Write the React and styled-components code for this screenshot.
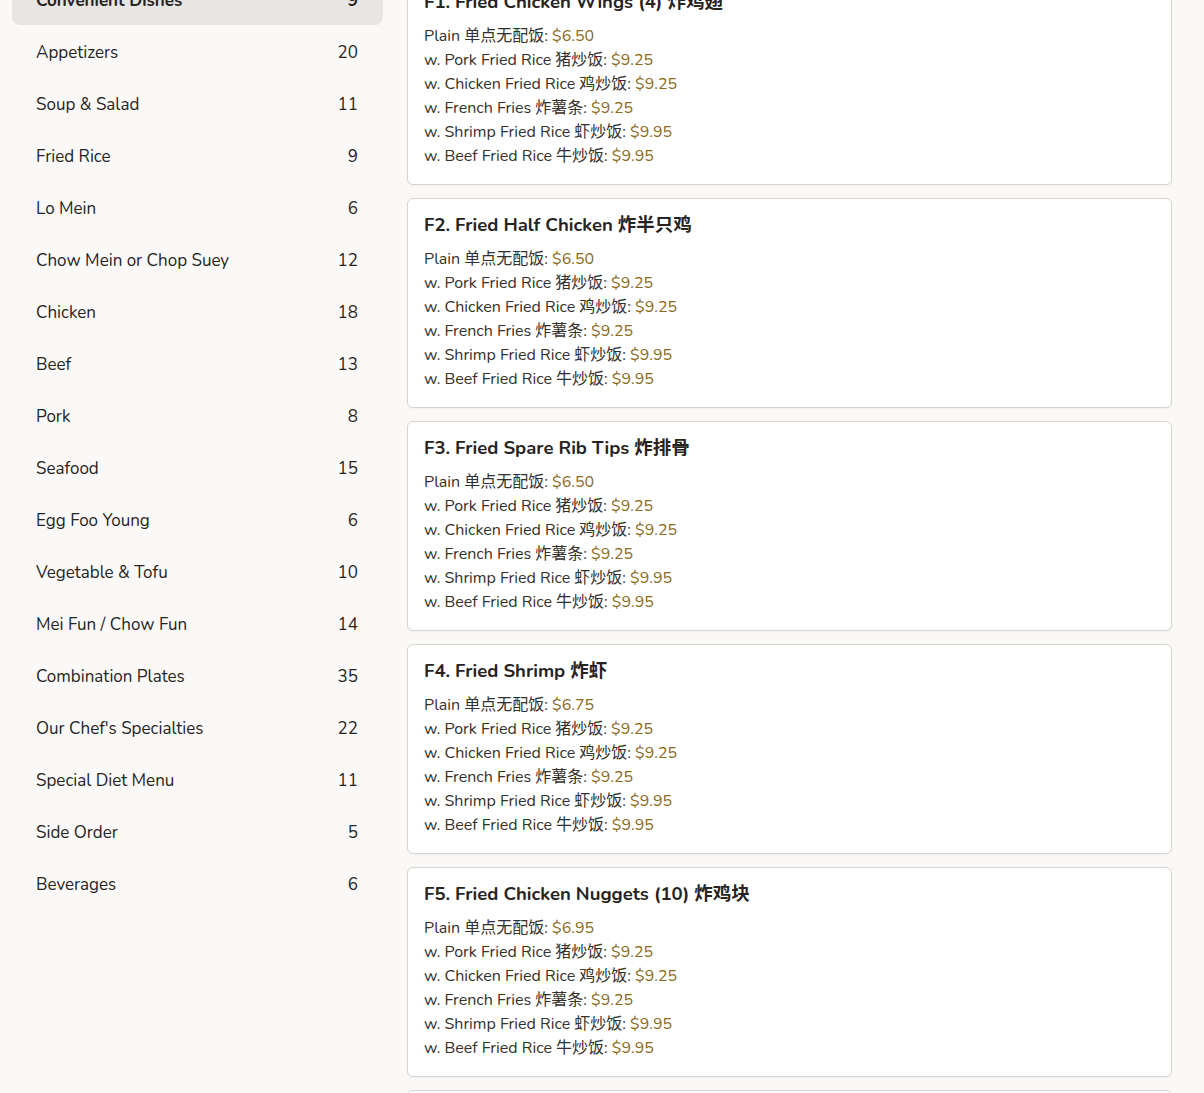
import React from 'react';
import styled, { createGlobalStyle } from 'styled-components';

const categories = [
  ['Convenient Dishes', 9],
  ['Appetizers', 20],
  ['Soup & Salad', 11],
  ['Fried Rice', 9],
  ['Lo Mein', 6],
  ['Chow Mein or Chop Suey', 12],
  ['Chicken', 18],
  ['Beef', 13],
  ['Pork', 8],
  ['Seafood', 15],
  ['Egg Foo Young', 6],
  ['Vegetable & Tofu', 10],
  ['Mei Fun / Chow Fun', 14],
  ['Combination Plates', 35],
  ["Our Chef's Specialties", 22],
  ['Special Diet Menu', 11],
  ['Side Order', 5],
  ['Beverages', 6],
];

const sides = [
  ['w. Pork Fried Rice 猪炒饭', '$9.25'],
  ['w. Chicken Fried Rice 鸡炒饭', '$9.25'],
  ['w. French Fries 炸薯条', '$9.25'],
  ['w. Shrimp Fried Rice 虾炒饭', '$9.95'],
  ['w. Beef Fried Rice 牛炒饭', '$9.95'],
];

const dishes = [
  { name: 'F1. Fried Chicken Wings (4) 炸鸡翅', plain: '$6.50' },
  { name: 'F2. Fried Half Chicken 炸半只鸡', plain: '$6.50' },
  { name: 'F3. Fried Spare Rib Tips 炸排骨', plain: '$6.50' },
  { name: 'F4. Fried Shrimp 炸虾', plain: '$6.75' },
  { name: 'F5. Fried Chicken Nuggets (10) 炸鸡块', plain: '$6.95' },
  { name: 'F6. Fried Scallops 炸带子', plain: '$6.95' },
];

export default function App() {
  return (
    <>
      <GlobalStyle />
      <Layout>
        <Sidebar>
          {categories.map(([label, count], i) => (
            <CategoryItem key={label} active={i === 0}>
              <span>{label}</span>
              <Count>{count}</Count>
            </CategoryItem>
          ))}
        </Sidebar>

        <Menu>
          {dishes.map((d) => (
            <DishCard key={d.name}>
              <DishTitle>{d.name}</DishTitle>
              <PriceList>
                <PriceRow>
                  Plain 单点无配饭: <Price>{d.plain}</Price>
                </PriceRow>
                {sides.map(([label, price]) => (
                  <PriceRow key={label}>
                    {label}: <Price>{price}</Price>
                  </PriceRow>
                ))}
              </PriceList>
            </DishCard>
          ))}
        </Menu>
      </Layout>
    </>
  );
}

const GlobalStyle = createGlobalStyle`
  html, body {
    margin: 0;
    background: #faf9f7;
    overflow: hidden;
  }
  body {
    font-family: Nunito, "Noto Sans", "Noto Sans CJK SC", sans-serif;
    color: #27241f;
  }
`;

// the page is shown scrolled down a little, as in the menu view
const Layout = styled.div`
  display: grid;
  grid-template-columns: 371px 765px;
  column-gap: 24px;
  align-items: start;
  padding-left: 12px;
  margin-top: -25px;
`;

const Sidebar = styled.nav`
  display: flex;
  flex-direction: column;
  gap: 2px;
`;

const CategoryItem = styled.div`
  display: flex;
  align-items: center;
  justify-content: space-between;
  height: 50px;
  padding: 0 25px 0 24px;
  border-radius: 8px;
  font-size: 17px;
  color: #27241f;
  font-weight: ${(p) => (p.active ? 700 : 400)};
  background: ${(p) => (p.active ? '#e8e6e2' : 'transparent')};
`;

const Count = styled.span`
  font-variant-numeric: tabular-nums;
`;

const Menu = styled.main`
  display: flex;
  flex-direction: column;
  gap: 13px;
`;

const DishCard = styled.section`
  background: #fff;
  border: 1px solid #d8d5d0;
  border-radius: 6px;
  padding: 16px;
  box-shadow: 0 1px 2px rgba(0, 0, 0, 0.04);
`;

const DishTitle = styled.h3`
  margin: 0 0 12px;
  font-size: 18.5px;
  line-height: 20px;
  font-weight: 700;
  color: #27241f;
`;

const PriceList = styled.div`
  display: flex;
  flex-direction: column;
`;

const PriceRow = styled.div`
  font-size: 16px;
  line-height: 24px;
  color: #34302b;
`;

const Price = styled.span`
  color: #8a6a1c;
`;
